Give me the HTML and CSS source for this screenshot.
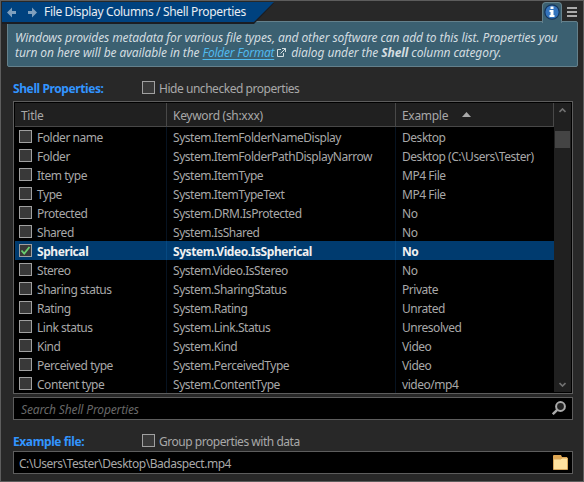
FILE: index.html
```html
<!DOCTYPE html>
<html lang="en">
<head>
<meta charset="utf-8">
<title>File Display Columns / Shell Properties</title>
<link rel="stylesheet" href="styles.css">
</head>
<body>
<div class="window">
  <header class="topbar">
    <div class="crumb">
      <svg class="crumb-bg" width="274" height="22" viewBox="0 0 274 22"><path d="M0 1H272L252 22H0Z" fill="#1b1d22"/><path d="M0 0H272L252 20H0Z" fill="#00427f"/></svg>
      <svg class="arrows" width="31" height="11" viewBox="0 0 31 11" fill="#7f9fbd"><path d="M0 5.500 5 .5V4H9V7H5V10.500Z"/><path d="M30 5.500 25 .5V4H21V7H25V10.500Z"/></svg>
      <h1>File Display Columns / Shell Properties</h1>
    </div>
    <div class="info-tab"><svg width="16" height="16" viewBox="0 0 16 16"><circle cx="8" cy="8" r="7.200" fill="#3474bd" stroke="#15345b" stroke-width="1.200"/><path d="M6.500 2.500h3v2.500h-3zM5.500 6h4v5h1v2h-5v-2h1V8h-1z" fill="#fff"/></svg></div>
    <svg class="menu" width="10" height="10" viewBox="0 0 10 10" fill="#aaa"><path d="M0 0h10v2H0zM0 4h10v2H0zM0 8h10v2H0z"/></svg>
  </header>
  <section class="info">
    <p class="line1">Windows provides metadata for various file types, and other software can add to this list. Properties you</p>
    <p class="line2">turn on here will be available in the <a>Folder Format</a><svg class="ext" width="9" height="9" viewBox="0 0 9 9" fill="none" stroke="#d3dde0"><path d="M4 1.500H.5v7h6V5M5 .5h3.500V4M8.500.5 3.500 5.500"/></svg>dialog under the <b>Shell</b> column category.</p>
  </section>
  <div class="label-row"><h2>Shell Properties:</h2><i class="check"></i><span>Hide unchecked properties</span></div>
  <section class="table">
    <div class="grid">
      <div class="head"><span>Title</span><span class="keyword">Keyword (sh:xxx)</span><span>Example<svg class="sort" width="9" height="5" viewBox="0 0 9 5"><path d="M0 5 4.500 0 9 5Z" fill="#aaa"/></svg></span></div>
      <div class="row"><span><i class="check"></i>Folder name</span><span>System.ItemFolderNameDisplay</span><span>Desktop</span></div>
      <div class="row"><span><i class="check"></i>Folder</span><span>System.ItemFolderPathDisplayNarrow</span><span>Desktop (C:\Users\Tester)</span></div>
      <div class="row"><span><i class="check"></i>Item type</span><span>System.ItemType</span><span>MP4 File</span></div>
      <div class="row"><span><i class="check"></i>Type</span><span>System.ItemTypeText</span><span>MP4 File</span></div>
      <div class="row"><span><i class="check"></i>Protected</span><span>System.DRM.IsProtected</span><span>No</span></div>
      <div class="row"><span><i class="check"></i>Shared</span><span>System.IsShared</span><span>No</span></div>
      <div class="row selected"><span><i class="check"><svg width="11" height="11" viewBox="0 0 11 11"><path d="M1.500 5.500 4.200 8.500 9.500 2" fill="none" stroke="#68cf70" stroke-width="1.800"/></svg></i>Spherical</span><span>System.Video.IsSpherical</span><span>No</span></div>
      <div class="row"><span><i class="check"></i>Stereo</span><span>System.Video.IsStereo</span><span>No</span></div>
      <div class="row"><span><i class="check"></i>Sharing status</span><span>System.SharingStatus</span><span>Private</span></div>
      <div class="row"><span><i class="check"></i>Rating</span><span>System.Rating</span><span>Unrated</span></div>
      <div class="row"><span><i class="check"></i>Link status</span><span>System.Link.Status</span><span>Unresolved</span></div>
      <div class="row"><span><i class="check"></i>Kind</span><span>System.Kind</span><span>Video</span></div>
      <div class="row"><span><i class="check"></i>Perceived type</span><span>System.PerceivedType</span><span>Video</span></div>
      <div class="row"><span><i class="check"></i>Content type</span><span>System.ContentType</span><span>video/mp4</span></div>
    </div>
    <div class="scrollbar">
      <svg width="7" height="5" viewBox="0 0 7 5"><path d="M.5 4 3.500 1 6.500 4" fill="none" stroke="#707070" stroke-width="1.700"/></svg>
      <div class="thumb"></div>
      <svg class="down" width="7" height="5" viewBox="0 0 7 5"><path d="M.5 1 3.500 4 6.500 1" fill="none" stroke="#707070" stroke-width="1.700"/></svg>
    </div>
  </section>
  <div class="field search"><span>Search Shell Properties</span><svg width="14" height="14" viewBox="0 0 14 14" fill="none" stroke="#aaa"><circle cx="8.500" cy="5.500" r="4.400" fill="#222" stroke-width="2"/><path d="M5.200 8.800.8 13.200" stroke-width="2.400"/></svg></div>
  <div class="label-row second"><h2>Example file:</h2><i class="check"></i><span>Group properties with data</span></div>
  <div class="field path"><span>C:\Users\Tester\Desktop\Badaspect.mp4</span><svg width="15" height="15" viewBox="0 0 15 15"><path d="M0 1Q0 0 1 0H8L9 2H14V5H0Z" fill="#dda552"/><path d="M.5 4H8L9 3H14.500V14.500H.5Z" fill="#ffe2a0" stroke="#d8a75c"/></svg></div>
</div>
</body>
</html>
```

FILE: styles.css
```css
* { box-sizing: border-box; }
body { margin: 0; background: #282828; color: #a8a8a8; font: 12px/19px "Noto Sans", sans-serif; letter-spacing: -.46px; }
svg { display: block; flex: none; }
h1, h2, p { margin: 0; font-size: 12px; }
.window { width: 584px; height: 482px; border: 1px solid #5d5d5d; padding-left: 1px; overflow: hidden; }
.topbar { display: flex; height: 20px; padding-top: 1px; }
.crumb { position: relative; z-index: 3; display: flex; width: 274px; height: 20px; padding: 5px 0 0 5px; }
.crumb-bg { position: absolute; left: 0; top: 0; }
.arrows { position: relative; }
.crumb h1 { position: relative; margin: -5px 0 0 6px; color: #e8edf2; font-weight: 400; line-height: 20px; letter-spacing: -.34px; white-space: nowrap; }
.info-tab { position: relative; z-index: 2; width: 20px; height: 21px; margin-left: 266px; padding: 1px 0 0 1px; border: 1px solid #64808b; border-bottom: 0; border-radius: 4px 4px 0 0; background: #3b6071; }
.menu { margin: 5px 0 0 5px; }
.info { width: 571px; height: 46px; margin-left: 5px; padding: 8px 0 0 7px; border: 1px solid #64808b; border-radius: 2px; background: #3b6071; color: #d3dde0; font-style: italic; line-height: 15px; letter-spacing: -.09px; white-space: nowrap; }
.line1 { width: max-content; }
.line2 { display: flex; width: max-content; white-space: pre; letter-spacing: -.09px; }
.info a { color: #50b9ee; letter-spacing: -.25px; text-decoration: underline; text-underline-offset: 2px; }
.ext { margin: 3px 5px 0 3px; }
.label-row { display: flex; align-items: center; width: 560px; height: 19px; margin: 11px 0 4px 11px; }
.label-row h2 { width: 129px; padding-top: 2px; color: #3295ff; letter-spacing: -.4px; white-space: nowrap; }
.label-row span { margin-left: 4px; padding-top: 2px; }
.check { display: block; flex: none; width: 13px; height: 13px; border: 1px solid #a0a0a0; background: #393939; }
.table { display: flex; width: 560px; height: 293px; margin-left: 11px; padding: 1px; border: 1px solid #5d5d5d; background: #000; }
.grid { width: 539px; }
.head, .row { display: grid; grid-template-columns: 152px 229px 158px; }
.head { height: 24px; border-bottom: 1px solid #484848; background: #202020; line-height: 21px; letter-spacing: -.3px; }
.head span { display: flex; align-items: center; padding: 2px 0 0 6px; border-right: 1px solid #484848; white-space: nowrap; }
.sort { margin: -2px 0 0 14px; }
.row { height: 19px; line-height: 17px; }
.row span { display: flex; align-items: center; padding: 2px 0 0 6px; border-right: 1px solid #071321; white-space: nowrap; }
.row span:last-child { border: 0; }
.row span:first-child { padding-left: 4px; }
.row .check { margin: -2px 5px 0 0; }
.selected { background: #003b6f; color: #f0f0f0; font-weight: 700; letter-spacing: -.42px; }
.selected span { border-color: #064982; }
.scrollbar { display: flex; flex-direction: column; align-items: center; width: 17px; height: 289px; padding: 5px 0; background: #202020; }
.thumb { width: 15px; height: 17px; margin-top: 18px; background: #444; }
.down { margin-top: auto; }
.field { display: flex; align-items: center; justify-content: space-between; width: 560px; height: 23px; margin: 3px 0 0 11px; padding: 0 6px 0 7px; border: 1px solid #5d5d5d; background: #000; }
.field span { padding-top: 2px; }
.search span { color: #686868; font-style: italic; letter-spacing: -.15px; }
.search svg { margin-top: -1px; }
.label-row.second { margin: 11px 0 1px 11px; }
.path { margin-top: 0; padding: 0 4px 0 5px; }
```
